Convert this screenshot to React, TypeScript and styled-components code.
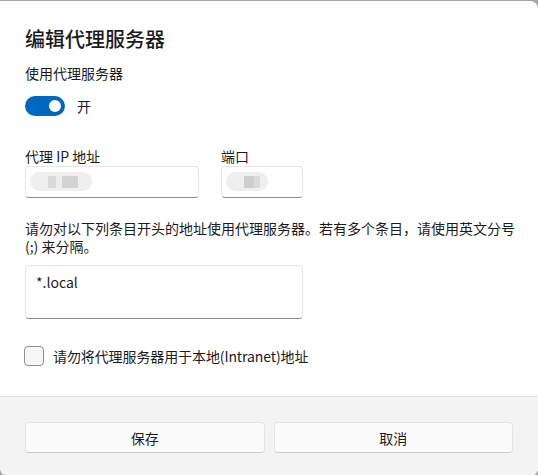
import React from "react";
import styled, { createGlobalStyle } from "styled-components";

const Global = createGlobalStyle`
  html, body { margin: 0; padding: 0; background: #a6a6a6; }
  body { width: 538px; height: 475px; overflow: hidden; }
  * { box-sizing: border-box; }
`;

const FONT = `"Noto Sans CJK SC", "Noto Sans", sans-serif`;

const Dialog = styled.div`
  width: 538px;
  height: 475px;
  margin-top: 1px;
  background: #ffffff;
  border-radius: 0 8px 8px 8px;
  overflow: hidden;
  display: flex;
  flex-direction: column;
  font-family: ${FONT};
  color: #1b1b1b;
`;

const Body = styled.div`
  flex: 1;
  padding: 24px 12px 0 25px;
  display: flex;
  flex-direction: column;
`;

const Title = styled.h1`
  margin: 0;
  font-size: 20px;
  font-weight: 500;
  line-height: 28px;
`;

const Label = styled.div<{ $mt?: number }>`
  font-size: 14px;
  line-height: 19px;
  margin-top: ${(p) => p.$mt ?? 0}px;
`;

const ToggleRow = styled.div`
  display: flex;
  align-items: center;
  gap: 12px;
  margin-top: 13px;
  font-size: 14px;
  line-height: 20px;
`;

const Toggle = styled.div`
  width: 40px;
  height: 20px;
  border-radius: 10px;
  background: #0067c0;
  display: flex;
  align-items: center;
  justify-content: flex-end;
  padding-right: 4px;
`;

const Knob = styled.div`
  width: 12px;
  height: 12px;
  border-radius: 50%;
  background: #ffffff;
`;

const FieldRow = styled.div`
  display: flex;
  gap: 22px;
  margin-top: 31px;
`;

const Field = styled.div<{ $w: number }>`
  width: ${(p) => p.$w}px;
  display: flex;
  flex-direction: column;
`;

const Input = styled.div<{ $h?: number }>`
  height: ${(p) => p.$h ?? 32}px;
  background: #ffffff;
  border: 1px solid #e6e6e6;
  border-bottom: 1px solid #8a8a8a;
  border-radius: 4px;
  display: flex;
  align-items: flex-start;
  padding: 5px 10px;
  font-size: 14px;
  line-height: 18px;
`;

const Blob = styled.div<{ $w: number }>`
  width: ${(p) => p.$w}px;
  height: 19px;
  border-radius: 10px;
  background: #efefef;
  margin-left: -6px;
  display: flex;
  align-items: center;
  padding-left: 18px;
`;

const Pix = styled.div<{ $w: number; $c: string }>`
  width: ${(p) => p.$w}px;
  height: 12px;
  background: ${(p) => p.$c};
`;

const Para = styled.p`
  margin: 21px 0 0;
  font-size: 14px;
  line-height: 18px;
`;

const Area = styled(Input)`
  width: 278px;
  margin-top: 10px;
  padding: 7px 10px;
`;

const CheckRow = styled.label`
  display: flex;
  align-items: center;
  gap: 9px;
  margin-top: 27px;
  margin-left: -1px;
  font-size: 14px;
  letter-spacing: -0.1px;
`;

const Box = styled.span`
  width: 20px;
  height: 20px;
  border: 1px solid #8d8d8d;
  border-radius: 4px;
  background: #f6f6f6;
`;

const Footer = styled.div`
  height: 80px;
  background: #f3f3f3;
  border-top: 1px solid #e5e5e5;
  display: grid;
  grid-template-columns: 1fr 1fr;
  gap: 9px;
  padding: 25px 25px 0 25px;
  align-items: start;
`;

const Button = styled.button`
  height: 31px;
  background: #fbfbfb;
  border: 1px solid #e5e5e5;
  border-bottom-color: #cccccc;
  border-radius: 4px;
  font-family: ${FONT};
  font-size: 14px;
  color: #1b1b1b;
`;

export default function App() {
  return (
    <>
      <Global />
      <Dialog>
        <Body>
          <Title>编辑代理服务器</Title>
          <Label $mt={11}>使用代理服务器</Label>
          <ToggleRow>
            <Toggle>
              <Knob />
            </Toggle>
            <span>开</span>
          </ToggleRow>
          <FieldRow>
            <Field $w={174}>
              <Label>代理 IP 地址</Label>
              <Input>
                <Blob $w={62}>
                  <Pix $w={8} $c="#dadada" />
                  <Pix $w={6} $c="#ececec" />
                  <Pix $w={16} $c="#d2d2d2" />
                </Blob>
              </Input>
            </Field>
            <Field $w={82}>
              <Label>端口</Label>
              <Input>
                <Blob $w={42}>
                  <Pix $w={10} $c="#cfcfcf" />
                  <Pix $w={6} $c="#dadada" />
                </Blob>
              </Input>
            </Field>
          </FieldRow>
          <Para>
            请勿对以下列条目开头的地址使用代理服务器。若有多个条目，请使用英文分号
            <br />
            (;) 来分隔。
          </Para>
          <Area $h={54}>*.local</Area>
          <CheckRow>
            <Box />
            <span>请勿将代理服务器用于本地(Intranet)地址</span>
          </CheckRow>
        </Body>
        <Footer>
          <Button>保存</Button>
          <Button>取消</Button>
        </Footer>
      </Dialog>
    </>
  );
}
